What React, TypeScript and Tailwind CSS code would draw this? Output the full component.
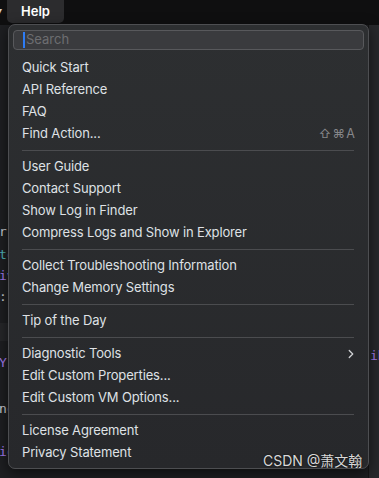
import { ChevronRight } from "lucide-react";

type Item = { label: string; shortcut?: string; submenu?: boolean };

const groups: Item[][] = [
  [
    { label: "Quick Start" },
    { label: "API Reference" },
    { label: "FAQ" },
    { label: "Find Action...", shortcut: "⇧⌘A" },
  ],
  [
    { label: "User Guide" },
    { label: "Contact Support" },
    { label: "Show Log in Finder" },
    { label: "Compress Logs and Show in Explorer" },
  ],
  [{ label: "Collect Troubleshooting Information" }, { label: "Change Memory Settings" }],
  [{ label: "Tip of the Day" }],
  [
    { label: "Diagnostic Tools", submenu: true },
    { label: "Edit Custom Properties..." },
    { label: "Edit Custom VM Options..." },
  ],
  [{ label: "License Agreement" }, { label: "Privacy Statement" }],
];

// bits of editor code peeking out on the left of the menu
const codeBits: { top: number; text: string; color: string }[] = [
  { top: 224, text: "r :", color: "text-[#c9ccd1]" },
  { top: 247, text: "tc", color: "text-[#4fb3b8]" },
  { top: 268, text: "iv", color: "text-[#a77cf0]" },
  { top: 289, text: " :", color: "text-[#c9ccd1]" },
  { top: 355, text: "Yr", color: "text-[#a77cf0]" },
  { top: 401, text: "nc", color: "text-[#c9ccd1]" },
  { top: 444, text: "ic", color: "text-[#a77cf0]" },
];

function MenuRow({ item }: { item: Item }) {
  return (
    <div className="flex h-[22px] items-center justify-between pl-[13px] pr-[12px] text-[13px] tracking-[-0.15px] text-[#dfe1e5]">
      <span>{item.label}</span>
      {item.shortcut && <span className="text-[12.5px] text-[#86878a] tracking-[1.2px]">{item.shortcut}</span>}
      {item.submenu && <ChevronRight size={14} strokeWidth={2.2} className="text-[#cfd1d4] mr-[-2px]" />}
    </div>
  );
}

export default function App() {
  return (
    <div
      className="relative w-[379px] h-[478px] overflow-hidden bg-[#1e1f22]"
      style={{ fontFamily: "Inter, 'Noto Sans', 'Noto Sans CJK SC', sans-serif" }}
    >
      <div className="flex h-[25px] items-start bg-[#0f0f10]">
        <span className="-ml-[3px] mt-[5px] w-[10px] text-[10px] leading-none text-[#cfd0d2]">▾</span>
        <div className="flex h-[23px] w-[57px] items-center justify-center rounded-b-[5px] bg-[#2c2c2e] text-[13px] font-semibold text-white">
          Help
        </div>
      </div>

      {codeBits.map((b) => (
        <div
          key={b.top}
          className={`absolute left-[-1px] text-[13px] leading-[16px] ${b.color}`}
          style={{ top: b.top, fontFamily: "'DejaVu Sans Mono', monospace" }}
        >
          {b.text}
        </div>
      ))}
      <div className="absolute left-0 top-[323px] h-[18px] w-[8px] bg-[#26272a]" />

      <div className="absolute right-0 top-[25px] bottom-0 w-[11px] bg-[#27282b] border-l border-[#151516]">
        <div
          className="absolute left-[1px] top-[321px] text-[13px] text-[#a77cf0]"
          style={{ fontFamily: "'DejaVu Sans Mono', monospace" }}
        >
          ib
        </div>
      </div>

      <div className="absolute left-[8px] top-[24px] w-[361px] h-[445px] rounded-[7px] border border-[#4d4e51] bg-gradient-to-b from-[#2d2f31] to-[#27282b] shadow-[0_4px_14px_rgba(0,0,0,0.6)]">
        <div className="px-[4px] pt-[5px]">
          <div className="relative flex h-[20px] items-center rounded-[4px] border border-[#58595c] bg-[#3a3b3e] pl-[9px]">
            <div className="h-[16px] w-[2px] bg-[#2d7cf4]" />
            <span className="ml-[1px] text-[13px] text-[#6d6e71]">Search</span>
          </div>
        </div>
        <div className="pt-[7px]">
          {groups.map((g, i) => (
            <div key={i}>
              {i > 0 && (
                <div className="flex h-[11px] items-center pl-[13px] pr-[14px]">
                  <div className="h-px w-full bg-[#4b4c4f]" />
                </div>
              )}
              {g.map((it) => (
                <MenuRow key={it.label} item={it} />
              ))}
            </div>
          ))}
        </div>
      </div>

      <div className="absolute left-[263px] top-[450px] text-[14px] text-[#d8d8d8] [text-shadow:0_0_2px_rgba(0,0,0,0.8)]">
        CSDN @萧文翰
      </div>
    </div>
  );
}
